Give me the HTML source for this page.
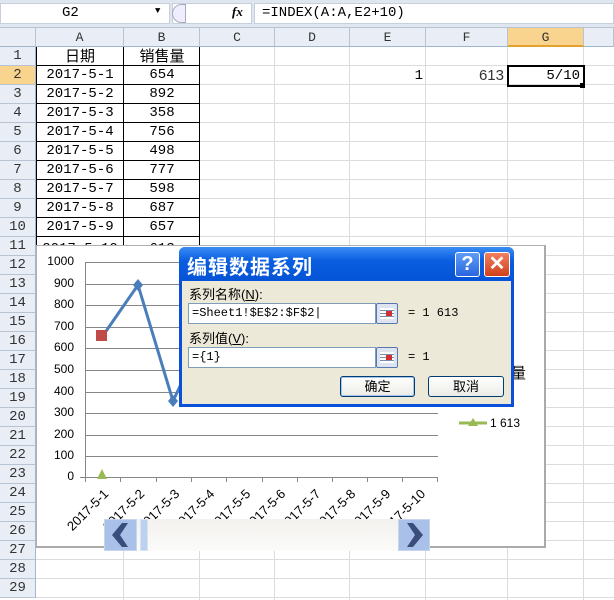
<!DOCTYPE html>
<html><head><meta charset="utf-8"><style>
*{margin:0;padding:0;box-sizing:border-box}
body{width:614px;height:600px;overflow:hidden;background:#fff;position:relative;font-family:"Liberation Mono","Noto Sans CJK SC",monospace;font-size:13px;color:#000}
.a{position:absolute}
.rh{position:absolute;left:0;width:36px;height:19px;background:#e9eef6;border-bottom:1px solid #b9c4d3;border-right:1px solid #9eb6ce;text-align:center;line-height:19px;font-size:14px;color:#333}
.ch{position:absolute;top:28px;height:19px;background:#e9eef6;border-right:1px solid #b9c4d3;border-bottom:1px solid #9eb6ce;text-align:center;line-height:19px;font-size:13px;color:#333}
.c{position:absolute;height:19px;line-height:19px;text-align:center;font-size:14px}
.yl{position:absolute;left:40px;width:34px;text-align:right;font-family:"Liberation Sans",sans-serif;font-size:12px}
.xl{position:absolute;font-family:"Liberation Sans",sans-serif;font-size:13px;transform:rotate(-45deg);transform-origin:right center;white-space:nowrap;text-align:right;width:64px}
.cn{font-family:"Liberation Sans","Noto Sans CJK SC",sans-serif}
</style></head><body>
<div class="a" style="left:0;top:0;width:614px;height:28px;background:#dfe6ef;border-bottom:1px solid #b9c4d3"></div>
<div class="a" style="left:0;top:3px;width:170px;height:21px;background:#fff;border:1px solid #c5d0dc"></div>
<div class="a" style="left:62px;top:5px;font-size:14px">G2</div>
<div class="a" style="left:155px;top:6px;font-size:9px">▼</div>
<div class="a" style="left:172px;top:3px;width:80px;height:21px;background:#fff;border:1px solid #c5d0dc"></div>
<div class="a" style="left:172px;top:4px;width:14px;height:19px;border-radius:10px 0 0 10px;border:1px solid #aab;background:#eef"></div>
<div class="a" style="left:232px;top:4px;font-style:italic;font-family:'Liberation Serif',serif;font-size:13px;font-weight:bold">fx</div>
<div class="a" style="left:254px;top:3px;width:360px;height:21px;background:#fff;border:1px solid #c5d0dc"></div>
<div class="a" style="left:262px;top:5px;font-size:14px">=INDEX(A:A,E2+10)</div>
<div class="ch" style="left:0;width:36px"></div>
<div class="ch" style="left:36px;width:88px">A</div>
<div class="ch" style="left:124px;width:76px">B</div>
<div class="ch" style="left:200px;width:75px">C</div>
<div class="ch" style="left:275px;width:75px">D</div>
<div class="ch" style="left:350px;width:76px">E</div>
<div class="ch" style="left:426px;width:82px">F</div>
<div class="ch" style="left:508px;width:76px;background:#f8d48e;border-bottom:2px solid #e3a22d">G</div>
<div class="ch" style="left:584px;width:30px"></div>
<div class="a" style="left:36px;top:47px;width:578px;height:553px;background:repeating-linear-gradient(to bottom,transparent 0,transparent 18px,#dadcdd 18px,#dadcdd 19px)"></div>
<div class="a" style="left:123px;top:47px;width:1px;height:553px;background:#dadcdd"></div>
<div class="a" style="left:199px;top:47px;width:1px;height:553px;background:#dadcdd"></div>
<div class="a" style="left:274px;top:47px;width:1px;height:553px;background:#dadcdd"></div>
<div class="a" style="left:349px;top:47px;width:1px;height:553px;background:#dadcdd"></div>
<div class="a" style="left:425px;top:47px;width:1px;height:553px;background:#dadcdd"></div>
<div class="a" style="left:507px;top:47px;width:1px;height:553px;background:#dadcdd"></div>
<div class="a" style="left:583px;top:47px;width:1px;height:553px;background:#dadcdd"></div>
<div class="rh" style="top:47px">1</div><div class="rh" style="top:66px;background:#f8d48e">2</div>
<div class="rh" style="top:85px">3</div><div class="rh" style="top:104px">4</div><div class="rh" style="top:123px">5</div>
<div class="rh" style="top:142px">6</div><div class="rh" style="top:161px">7</div><div class="rh" style="top:180px">8</div>
<div class="rh" style="top:199px">9</div><div class="rh" style="top:218px">10</div><div class="rh" style="top:237px">11</div>
<div class="rh" style="top:256px">12</div><div class="rh" style="top:275px">13</div><div class="rh" style="top:294px">14</div>
<div class="rh" style="top:313px">15</div><div class="rh" style="top:332px">16</div><div class="rh" style="top:351px">17</div>
<div class="rh" style="top:370px">18</div><div class="rh" style="top:389px">19</div><div class="rh" style="top:408px">20</div>
<div class="rh" style="top:427px">21</div><div class="rh" style="top:446px">22</div><div class="rh" style="top:465px">23</div>
<div class="rh" style="top:484px">24</div><div class="rh" style="top:503px">25</div><div class="rh" style="top:522px">26</div>
<div class="rh" style="top:541px">27</div><div class="rh" style="top:560px">28</div><div class="rh" style="top:579px">29</div>
<div class="a" style="left:36px;top:47px;width:164px;height:200px;border-left:1px solid #000;border-right:1px solid #000;background:repeating-linear-gradient(to bottom,transparent 0,transparent 18px,#000 18px,#000 19px)"></div>
<div class="a" style="left:123px;top:47px;width:1px;height:200px;background:#000"></div>
<div class="c cn" style="left:36px;top:47px;width:88px;font-size:15px">日期</div><div class="c cn" style="left:124px;top:47px;width:76px;font-size:15px">销售量</div>
<div class="c" style="left:36px;top:66px;width:88px">2017-5-1</div><div class="c" style="left:124px;top:66px;width:76px">654</div>
<div class="c" style="left:36px;top:85px;width:88px">2017-5-2</div><div class="c" style="left:124px;top:85px;width:76px">892</div>
<div class="c" style="left:36px;top:104px;width:88px">2017-5-3</div><div class="c" style="left:124px;top:104px;width:76px">358</div>
<div class="c" style="left:36px;top:123px;width:88px">2017-5-4</div><div class="c" style="left:124px;top:123px;width:76px">756</div>
<div class="c" style="left:36px;top:142px;width:88px">2017-5-5</div><div class="c" style="left:124px;top:142px;width:76px">498</div>
<div class="c" style="left:36px;top:161px;width:88px">2017-5-6</div><div class="c" style="left:124px;top:161px;width:76px">777</div>
<div class="c" style="left:36px;top:180px;width:88px">2017-5-7</div><div class="c" style="left:124px;top:180px;width:76px">598</div>
<div class="c" style="left:36px;top:199px;width:88px">2017-5-8</div><div class="c" style="left:124px;top:199px;width:76px">687</div>
<div class="c" style="left:36px;top:218px;width:88px">2017-5-9</div><div class="c" style="left:124px;top:218px;width:76px">657</div>
<div class="c" style="left:36px;top:240px;width:88px">2017-5-10</div><div class="c" style="left:124px;top:240px;width:76px">613</div>
<div class="a" style="left:405px;top:68px;width:18px;text-align:right;font-size:14px">1</div>
<div class="a" style="left:460px;top:67px;width:44px;text-align:right;font-family:'Liberation Sans',sans-serif;font-size:15px;color:#333">613</div>
<div class="a" style="left:507px;top:65px;width:78px;height:22px;border:2px solid #000"></div>
<div class="a" style="left:580px;top:83px;width:5px;height:5px;background:#000"></div>
<div class="a" style="left:520px;top:68px;width:60px;text-align:right;font-size:14px">5/10</div>
<div class="a" style="left:36px;top:245px;width:510px;height:303px;background:#fff;border:1px solid #b0b0b0;border-right:2px solid #aaa;border-bottom:2px solid #aaa"></div>
<svg class="a" style="left:0;top:0" width="614" height="600">
<g stroke="#868686" stroke-width="1">
<line x1="85" y1="262.5" x2="438" y2="262.5"/><line x1="85" y1="284.5" x2="438" y2="284.5"/><line x1="85" y1="305.5" x2="438" y2="305.5"/><line x1="85" y1="327.5" x2="438" y2="327.5"/><line x1="85" y1="348.5" x2="438" y2="348.5"/><line x1="85" y1="370.5" x2="438" y2="370.5"/><line x1="85" y1="392.5" x2="438" y2="392.5"/><line x1="85" y1="413.5" x2="438" y2="413.5"/><line x1="85" y1="435.5" x2="438" y2="435.5"/><line x1="85" y1="456.5" x2="438" y2="456.5"/><line x1="80" y1="477.5" x2="438" y2="477.5"/>
<line x1="85.5" y1="262" x2="85.5" y2="482"/>
<line x1="120.5" y1="477" x2="120.5" y2="482"/><line x1="156.5" y1="477" x2="156.5" y2="482"/><line x1="191.5" y1="477" x2="191.5" y2="482"/><line x1="226.5" y1="477" x2="226.5" y2="482"/><line x1="262.5" y1="477" x2="262.5" y2="482"/><line x1="297.5" y1="477" x2="297.5" y2="482"/><line x1="332.5" y1="477" x2="332.5" y2="482"/><line x1="367.5" y1="477" x2="367.5" y2="482"/><line x1="402.5" y1="477" x2="402.5" y2="482"/><line x1="437.5" y1="477" x2="437.5" y2="482"/>
</g>
<polyline points="102,337 138,285 173,401 190,365" fill="none" stroke="#4a7ebb" stroke-width="3"/>
<path d="M138 279 L143 285 L138 291 L133 285Z" fill="#4a7ebb"/>
<path d="M173 395 L178 401 L173 407 L168 401Z" fill="#4a7ebb"/>
<rect x="96" y="330" width="11" height="11" fill="#be4b48"/>
<path d="M102 469 L107 479 L97 479Z" fill="#98b954"/>
<line x1="459" y1="423" x2="487" y2="423" stroke="#98b954" stroke-width="3"/>
<path d="M473 418 L478 426 L468 426Z" fill="#98b954"/>
</svg>
<div class="yl" style="top:254px">1000</div><div class="yl" style="top:276px">900</div><div class="yl" style="top:297px">800</div><div class="yl" style="top:319px">700</div><div class="yl" style="top:340px">600</div><div class="yl" style="top:362px">500</div><div class="yl" style="top:384px">400</div><div class="yl" style="top:405px">300</div><div class="yl" style="top:427px">200</div><div class="yl" style="top:448px">100</div><div class="yl" style="top:469px">0</div>
<div class="xl" style="left:42px;top:484px">2017-5-1</div>
<div class="xl" style="left:78px;top:484px">2017-5-2</div>
<div class="xl" style="left:113px;top:484px">2017-5-3</div>
<div class="xl" style="left:148px;top:484px">2017-5-4</div>
<div class="xl" style="left:184px;top:484px">2017-5-5</div>
<div class="xl" style="left:219px;top:484px">2017-5-6</div>
<div class="xl" style="left:254px;top:484px">2017-5-7</div>
<div class="xl" style="left:289px;top:484px">2017-5-8</div>
<div class="xl" style="left:324px;top:484px">2017-5-9</div>
<div class="xl" style="left:359px;top:484px">2017-5-10</div>
<div class="a cn" style="left:511px;top:362px;font-size:15px">量</div>
<div class="a" style="left:490px;top:416px;font-family:'Liberation Sans',sans-serif;font-size:12px">1 613</div>
<div class="a" style="left:104px;top:519px;width:326px;height:32px;background:linear-gradient(#f2f1ee,#fbfbf9)"></div>
<div class="a" style="left:104px;top:519px;width:33px;height:32px;background:#a9c1e8;border:1px solid #c7d6ee"></div>
<div class="a" style="left:140px;top:519px;width:8px;height:32px;background:#bcd0ef;border:1px solid #d7e2f4"></div>
<div class="a" style="left:398px;top:519px;width:32px;height:32px;background:#a9c1e8;border:1px solid #c7d6ee"></div>
<svg class="a" style="left:104px;top:519px" width="326" height="32">
<path d="M24 4 L18 4 L8 16 L18 28 L24 28 L16 16Z" fill="#3a4d7c"/>
<path d="M303 4 L309 4 L319 16 L309 28 L303 28 L311 16Z" fill="#3a4d7c"/>
</svg>
<div class="a" style="left:179px;top:247px;width:335px;height:160px;background:#0a50d8;border-radius:6px 6px 0 0"></div>
<div class="a" style="left:179px;top:247px;width:335px;height:34px;background:linear-gradient(#3b8cf5,#0a5ee0 40%,#0553d6);border-radius:6px 6px 0 0"></div>
<div class="a cn" style="left:187px;top:251px;color:#fff;font-size:20px;font-weight:bold;letter-spacing:1px">编辑数据系列</div>
<div class="a" style="left:455px;top:252px;width:25px;height:25px;background:linear-gradient(#5f9cf7,#2966e0);border:1px solid #fff;border-radius:3px;color:#fff;font:bold 20px 'Liberation Sans',sans-serif;text-align:center;line-height:23px">?</div>
<div class="a" style="left:484px;top:252px;width:26px;height:25px;background:linear-gradient(#f0805e,#d0401c);border:1px solid #fff;border-radius:3px;color:#fff;font:bold 20px 'Liberation Sans',sans-serif;text-align:center;line-height:23px">✕</div>
<div class="a" style="left:182px;top:281px;width:329px;height:123px;background:#ece9d8"></div>
<div class="a cn" style="left:189px;top:284px;font-size:13px">系列名称(<u>N</u>):</div>
<div class="a" style="left:188px;top:303px;width:188px;height:21px;background:#fff;border:1px solid #7f9db9"></div>
<div class="a" style="left:192px;top:306px;font-size:12px">=Sheet1!$E$2:$F$2|</div>
<div class="a" style="left:376px;top:303px;width:22px;height:21px;background:#dde4ef;border:1px solid #5478b0;border-radius:2px"><div style="margin:4px 3px;width:14px;height:11px;background:repeating-linear-gradient(#fff 0,#fff 2px,#7a8cb0 2px,#7a8cb0 3px);position:relative"><div style="position:absolute;left:6px;top:3px;width:6px;height:5px;background:#d03030"></div></div></div>
<div class="a" style="left:408px;top:306px;font-size:12px">= 1 613</div>
<div class="a cn" style="left:189px;top:328px;font-size:13px">系列值(<u>V</u>):</div>
<div class="a" style="left:188px;top:347px;width:188px;height:21px;background:#fff;border:1px solid #7f9db9"></div>
<div class="a" style="left:192px;top:350px;font-size:12px">={1}</div>
<div class="a" style="left:376px;top:347px;width:22px;height:21px;background:#dde4ef;border:1px solid #5478b0;border-radius:2px"><div style="margin:4px 3px;width:14px;height:11px;background:repeating-linear-gradient(#fff 0,#fff 2px,#7a8cb0 2px,#7a8cb0 3px);position:relative"><div style="position:absolute;left:6px;top:3px;width:6px;height:5px;background:#d03030"></div></div></div>
<div class="a" style="left:408px;top:350px;font-size:12px">= 1</div>
<div class="a cn" style="left:340px;top:376px;width:75px;height:21px;border:1px solid #003c74;border-radius:3px;background:linear-gradient(#fff,#ecebe6);box-shadow:inset 0 0 0 1px #a8c4ec;text-align:center;line-height:19px;font-size:13px">确定</div>
<div class="a cn" style="left:428px;top:376px;width:76px;height:21px;border:1px solid #003c74;border-radius:3px;background:linear-gradient(#fff,#ecebe6);text-align:center;line-height:19px;font-size:13px">取消</div>
</body></html>
